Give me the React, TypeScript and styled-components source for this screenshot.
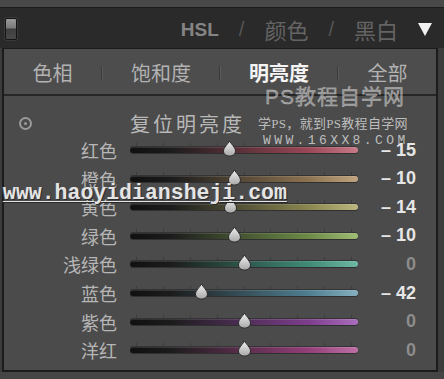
import React from 'react';
import styled, { createGlobalStyle } from 'styled-components';

const Global = createGlobalStyle`
  html, body { margin: 0; padding: 0; background: #3a3a3a; }
  * { box-sizing: border-box; }
`;

const CJK = `"Noto Sans CJK SC", "Noto Sans", sans-serif`;

const Frame = styled.div`
  position: relative;
  width: 444px;
  height: 379px;
  overflow: hidden;
  background: #3c3c3c;
  display: flex;
  flex-direction: column;
  font-family: ${CJK};
`;

const TopStrip = styled.div`
  height: 8px;
  background: #484848;
  border-bottom: 1px solid #1c1c1c;
  flex: none;
`;

const Header = styled.div`
  height: 40px;
  flex: none;
  background: #2a2a2a;
  display: flex;
  align-items: center;
  padding: 2px 12px 0 5px;
`;

const Toggle = styled.div`
  width: 12px;
  height: 22px;
  border: 1px solid #151515;
  border-radius: 2px;
  background: linear-gradient(#9a9a9a 0%, #7a7a7a 45%, #3e3e3e 50%, #4a4a4a 100%);
  box-shadow: 0 0 0 1px #3a3a3a;
`;

const ModeNav = styled.div`
  margin-left: auto;
  display: flex;
  align-items: center;
  gap: 20px;
  font-size: 22px;
  line-height: 1;
`;

const Mode = styled.span<{ $active?: boolean }>`
  color: ${p => (p.$active ? '#848484' : '#646464')};
  font-weight: ${p => (p.$active ? 700 : 400)};
  font-size: ${p => (p.$active ? '19px' : '22px')};
  font-family: ${p => (p.$active ? `"Liberation Sans", ${CJK}` : CJK)};
`;

const Slash = styled.span`
  color: #555;
  font-family: "Liberation Sans", sans-serif;
  font-size: 20px;
`;

const Caret = styled.div`
  margin-left: 20px;
  width: 0;
  height: 0;
  border-left: 7px solid transparent;
  border-right: 7px solid transparent;
  border-top: 13px solid #f2f2f2;
`;

const Panel = styled.div`
  height: 324px;
  margin: 0 6px 0 2px;
  border: 2px solid #1c1c1c;
  border-top-width: 1px;
  background: #4b4b4b;
  display: flex;
  flex-direction: column;
  flex: none;
`;

const Tabs = styled.div`
  height: 47px;
  flex: none;
  display: grid;
  grid-template-columns: 97px auto 116px auto 116px auto 97px;
  align-items: center;
  border-bottom: 2px solid #262626;
  background: #4d4d4d;
  padding-top: 2px;
`;

const Tab = styled.span<{ $active?: boolean }>`
  text-align: center;
  font-size: 20px;
  color: ${p => (p.$active ? '#f4f4f4' : '#b2b2b2')};
  font-weight: ${p => (p.$active ? 700 : 400)};
`;

const TabSep = styled.span`
  width: 1px;
  height: 14px;
  background: #3a3a3a;
  box-shadow: 1px 0 0 #5a5a5a;
`;

const Content = styled.div`
  flex: 1;
  padding-top: 15px;
  display: flex;
  flex-direction: column;
`;

const ResetRow = styled.div`
  height: 25px;
  display: flex;
  align-items: center;
`;

const Target = styled.div`
  margin-left: 15px;
  width: 13px;
  height: 13px;
  border: 2px solid #9a9a9a;
  border-radius: 50%;
  display: flex;
  align-items: center;
  justify-content: center;
  &::after {
    content: '';
    width: 3px;
    height: 3px;
    border-radius: 50%;
    background: #9a9a9a;
  }
`;

const ResetLabel = styled.span`
  margin-left: 98px;
  font-size: 20px;
  letter-spacing: 3px;
  color: #b8b8b8;
`;

const Row = styled.div`
  height: 28.55px;
  display: grid;
  grid-template-columns: 113px 228px 45px;
  column-gap: 13px;
  align-items: center;
`;

const Label = styled.span`
  text-align: right;
  font-size: 18px;
  color: #b6b6b6;
`;

const TrackWrap = styled.div`
  position: relative;
  height: 16px;
  display: flex;
  align-items: center;
`;

const Track = styled.div<{ $c: string; $hi: string }>`
  width: 100%;
  height: 6px;
  border-radius: 3px;
  background: linear-gradient(to right, #101010 0%, #1c1c1c 18%, ${p => p.$c} 78%, ${p => p.$hi} 100%);
  box-shadow: inset 0 1px 0 rgba(255,255,255,0.12), 0 1px 0 rgba(0,0,0,0.35), 0 -1px 0 rgba(0,0,0,0.3);
`;

const Ticks = styled.div`
  position: absolute;
  left: 6px;
  right: 6px;
  top: 1px;
  height: 3px;
  display: flex;
  justify-content: space-between;
  & > i {
    width: 1px;
    height: 3px;
    background: #3c3c3c;
  }
`;

const Thumb = styled.svg`
  position: absolute;
  top: -2px;
  width: 15px;
  height: 17px;
  margin-left: -7.5px;
`;

const Value = styled.span<{ $zero: boolean }>`
  text-align: right;
  font-family: "Liberation Sans", sans-serif;
  font-weight: 700;
  font-size: 18px;
  white-space: nowrap;
  color: ${p => (p.$zero ? '#8c8c8c' : '#e6e6e6')};
`;

const Wm1 = styled.div`
  position: absolute;
  left: 265px;
  top: 86px;
  font-size: 21px;
  letter-spacing: 1px;
  color: rgba(205, 205, 205, 0.55);
  -webkit-text-stroke: 0.4px rgba(230,230,230,0.6);
  font-family: "Liberation Sans", ${CJK};
  line-height: 1;
  pointer-events: none;
`;

const Wm2 = styled.div`
  position: absolute;
  left: 258px;
  top: 117px;
  font-size: 13px;
  letter-spacing: 0.3px;
  color: rgba(220, 220, 220, 0.8);
  font-family: "Liberation Serif", ${CJK};
  line-height: 1;
`;

const Wm3 = styled.div`
  position: absolute;
  left: 263px;
  top: 134px;
  font-size: 13px;
  letter-spacing: 3.4px;
  color: rgba(220, 220, 220, 0.8);
  font-family: "Liberation Mono", monospace;
  line-height: 1;
`;

const Wm4 = styled.div`
  position: absolute;
  left: 3px;
  top: 183px;
  font-size: 21.5px;
  font-weight: 700;
  color: #e4e4e4;
  text-decoration: underline;
  text-decoration-thickness: 1px;
  text-underline-offset: 2px;
  font-family: "Liberation Mono", monospace;
  text-shadow: 1px 1px 0 #2a2a2a, -1px 0 0 #555;
  line-height: 1;
`;

const Bottom = styled.div`
  flex: 1;
  background: #454545;
`;

const rows = [
  { name: '红色', v: -15, c: '#9a4656', hi: '#c87a88' },
  { name: '橙色', v: -10, c: '#8c7250', hi: '#c0a47e' },
  { name: '黄色', v: -14, c: '#8a8650', hi: '#bcb67e' },
  { name: '绿色', v: -10, c: '#6c8a46', hi: '#9ebc72' },
  { name: '浅绿色', v: 0, c: '#3e8a76', hi: '#6cb8a2' },
  { name: '蓝色', v: -42, c: '#4e7e90', hi: '#86b0c0' },
  { name: '紫色', v: 0, c: '#7c3e8c', hi: '#aa6cbc' },
  { name: '洋红', v: 0, c: '#923e78', hi: '#c070a6' },
];

const fmt = (v: number) => (v === 0 ? '0' : `${v < 0 ? '–' : '+'} ${Math.abs(v)}`);

export default function App() {
  return (
    <>
      <Global />
      <Frame>
        <TopStrip />
        <Header>
          <Toggle />
          <ModeNav>
            <Mode $active>HSL</Mode>
            <Slash>/</Slash>
            <Mode>颜色</Mode>
            <Slash>/</Slash>
            <Mode>黑白</Mode>
          </ModeNav>
          <Caret />
        </Header>
        <Panel>
          <Tabs>
            <Tab>色相</Tab>
            <TabSep />
            <Tab>饱和度</Tab>
            <TabSep />
            <Tab $active>明亮度</Tab>
            <TabSep />
            <Tab>全部</Tab>
          </Tabs>
          <Content>
            <ResetRow>
              <Target />
              <ResetLabel>复位明亮度</ResetLabel>
            </ResetRow>
            {rows.map(r => (
              <Row key={r.name}>
                <Label>{r.name}</Label>
                <TrackWrap>
                  <Ticks>
                    {Array.from({ length: 9 }).map((_, i) => (
                      <i key={i} />
                    ))}
                  </Ticks>
                  <Track $c={r.c} $hi={r.hi} />
                  <Thumb viewBox="0 0 15 17" style={{ left: `${50.4 + r.v * 0.45}%` }}>
                    <defs>
                      <linearGradient id={`g${r.name}`} x1="0" y1="0" x2="0" y2="1">
                        <stop offset="0" stopColor="#f0f0f0" />
                        <stop offset="1" stopColor="#a8a8a8" />
                      </linearGradient>
                    </defs>
                    <path
                      d="M7.5 1 C9 4, 13.5 7.5, 13.5 11 C13.5 14, 11 16, 7.5 16 C4 16, 1.5 14, 1.5 11 C1.5 7.5, 6 4, 7.5 1 Z"
                      fill={`url(#g${r.name})`}
                      stroke="#2a2a2a"
                      strokeWidth="1"
                    />
                  </Thumb>
                </TrackWrap>
                <Value $zero={r.v === 0}>{fmt(r.v)}</Value>
              </Row>
            ))}
          </Content>
        </Panel>
        <Bottom />
        <Wm1>PS教程自学网</Wm1>
        <Wm2>学PS，就到PS教程自学网</Wm2>
        <Wm3>WWW.16XX8.COM</Wm3>
        <Wm4>www.haoyidiansheji.com</Wm4>
      </Frame>
    </>
  );
}
